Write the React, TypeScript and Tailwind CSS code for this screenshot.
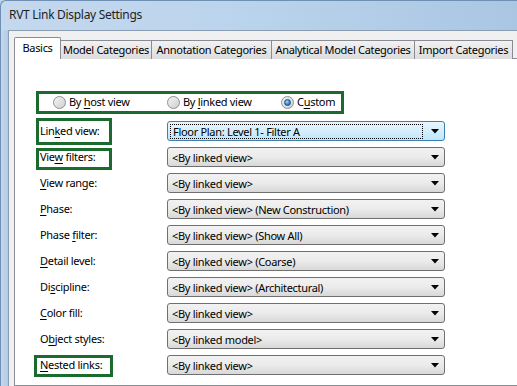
import type { ReactNode } from 'react';

const font = { fontFamily: '"Noto Sans", "Open Sans", sans-serif' };

function Mn({ pre, u, post }: { pre: string; u: string; post: string }) {
  return (
    <span>
      {pre}
      <span className="underline underline-offset-[2px] decoration-1">{u}</span>
      {post}
    </span>
  );
}

function Radio({ checked }: { checked?: boolean }) {
  return (
    <span className="w-[13px] h-[13px] rounded-full border border-[#8e8f8f] bg-gradient-to-br from-[#f4f4f4] to-[#cfcfcf] flex items-center justify-center shrink-0">
      {checked && (
        <span className="w-[7px] h-[7px] rounded-full bg-[radial-gradient(circle_at_40%_35%,#9fe0ff,#1f6fc0_70%)] border border-[#1a4f8a]" />
      )}
    </span>
  );
}

function Arrow() {
  return (
    <svg width="8" height="5" viewBox="0 0 8 5" className="shrink-0">
      <path d="M0 0H8L4 4.5Z" fill="#000" />
    </svg>
  );
}

function Dropdown({ value, active }: { value: string; active?: boolean }) {
  if (active) {
    return (
      <div className="w-[278px] h-[20px] rounded-[3px] border border-[#3c7fb1] bg-gradient-to-b from-[#eaf6fd] to-[#bee6fd] flex items-center pl-[2px] pr-[5px]">
        <div className="flex-1 h-[15px] border border-dotted border-black flex items-center pl-[2px] mr-[8px] leading-none">
          {value}
        </div>
        <Arrow />
      </div>
    );
  }
  return (
    <div className="w-[278px] h-[20px] rounded-[3px] border border-[#707070] bg-gradient-to-b from-[#f2f2f2] via-[#ebebeb] to-[#d8d8d8] flex items-center pl-[4px] pr-[5px]">
      <span className="flex-1 leading-none">{value}</span>
      <Arrow />
    </div>
  );
}

type Row = { label: ReactNode; value: string; active?: boolean; box?: string };

const rows: Row[] = [
  { label: <Mn pre="Lin" u="k" post="ed view:" />, value: 'Floor Plan: Level 1- Filter A', active: true, box: 'top-0 h-[27px]' },
  { label: <Mn pre="Vie" u="w" post=" filters:" />, value: '<By linked view>', box: 'top-[4px] h-[22px]' },
  { label: <Mn pre="" u="V" post="iew range:" />, value: '<By linked view>' },
  { label: <Mn pre="" u="P" post="hase:" />, value: '<By linked view> (New Construction)' },
  { label: <Mn pre="Phase " u="f" post="ilter:" />, value: '<By linked view> (Show All)' },
  { label: <Mn pre="" u="D" post="etail level:" />, value: '<By linked view> (Coarse)' },
  { label: <Mn pre="Di" u="s" post="cipline:" />, value: '<By linked view> (Architectural)' },
  { label: <Mn pre="" u="C" post="olor fill:" />, value: '<By linked view>' },
  { label: <Mn pre="O" u="b" post="ject styles:" />, value: '<By linked model>' },
  { label: <Mn pre="" u="N" post="ested links:" />, value: '<By linked view>', box: 'top-[3px] h-[22px] -left-[6px] w-[79px]' },
];

const tabs = [
  { t: 'Model Categories', w: 'w-[92px]' },
  { t: 'Annotation Categories', w: 'w-[121px]' },
  { t: 'Analytical Model Categories', w: 'w-[144px]' },
  { t: 'Import Categories', w: 'w-[99px]' },
];

export default function App() {
  return (
    <div
      className="w-[517px] h-[386px] overflow-hidden bg-[#bad2ea] flex flex-col text-[11px] tracking-[-0.3px] text-black"
      style={font}
    >
      <div className="h-[30px] shrink-0 bg-gradient-to-r from-[#c4d8ee] via-[#bad3ec] to-[#aac6e3] border-t border-l border-[#6f8fb3] rounded-tl-[6px] flex items-center pl-[8px] pb-[1px]">
        <span className="text-[12px] text-[#1e1e1e]">RVT Link Display Settings</span>
      </div>
      <div className="flex-1 flex border-l border-[#6f8fb3]">
        <div className="w-[7px] shrink-0 bg-gradient-to-r from-[#c4d8ee] to-[#b2cce6]" />
        <div className="flex-1 bg-[#f0f0f0] border-l border-t border-[#8a9db3] pl-[5px] pt-[6px] flex flex-col">
          <div className="flex items-end h-[22px] relative z-10">
            <div className="w-[47px] h-[22px] shrink-0 bg-white border border-b-0 border-[#898c95] rounded-t-[2px] flex items-center justify-center">
              Basics
            </div>
            {tabs.map((t) => (
              <div
                key={t.t}
                className={`${t.w} h-[19px] shrink-0 -ml-px border border-b-0 border-[#898c95] bg-gradient-to-b from-[#f2f2f2] to-[#dcdcdc] flex items-center justify-center whitespace-nowrap`}
              >
                {t.t}
              </div>
            ))}
          </div>
          <div className="flex-1 -mt-px bg-white border border-[#898c95] w-[520px] pl-[21px] pt-[32px]">
            <div className="w-[308px] h-[23px] border-[3px] border-[#1c6b2e] grid grid-cols-[114px_114px_1fr] items-center pl-[14px]">
              <div className="flex items-center gap-[3px]">
                <Radio />
                <Mn pre="By " u="h" post="ost view" />
              </div>
              <div className="flex items-center gap-[3px]">
                <Radio />
                <Mn pre="By " u="l" post="inked view" />
              </div>
              <div className="flex items-center gap-[3px]">
                <Radio checked />
                <Mn pre="C" u="u" post="stom" />
              </div>
            </div>
            <div className="mt-[4px] flex flex-col pl-[4px]">
              {rows.map((r, i) => (
                <div key={i} className="relative h-[26px] flex items-center">
                  <div className="w-[127px]">{r.label}</div>
                  <Dropdown value={r.value} active={r.active} />
                  {r.box && (
                    <div className={`absolute -left-[4px] w-[76px] border-[3px] border-[#1c6b2e] pointer-events-none ${r.box}`} />
                  )}
                </div>
              ))}
            </div>
          </div>
        </div>
      </div>
    </div>
  );
}
